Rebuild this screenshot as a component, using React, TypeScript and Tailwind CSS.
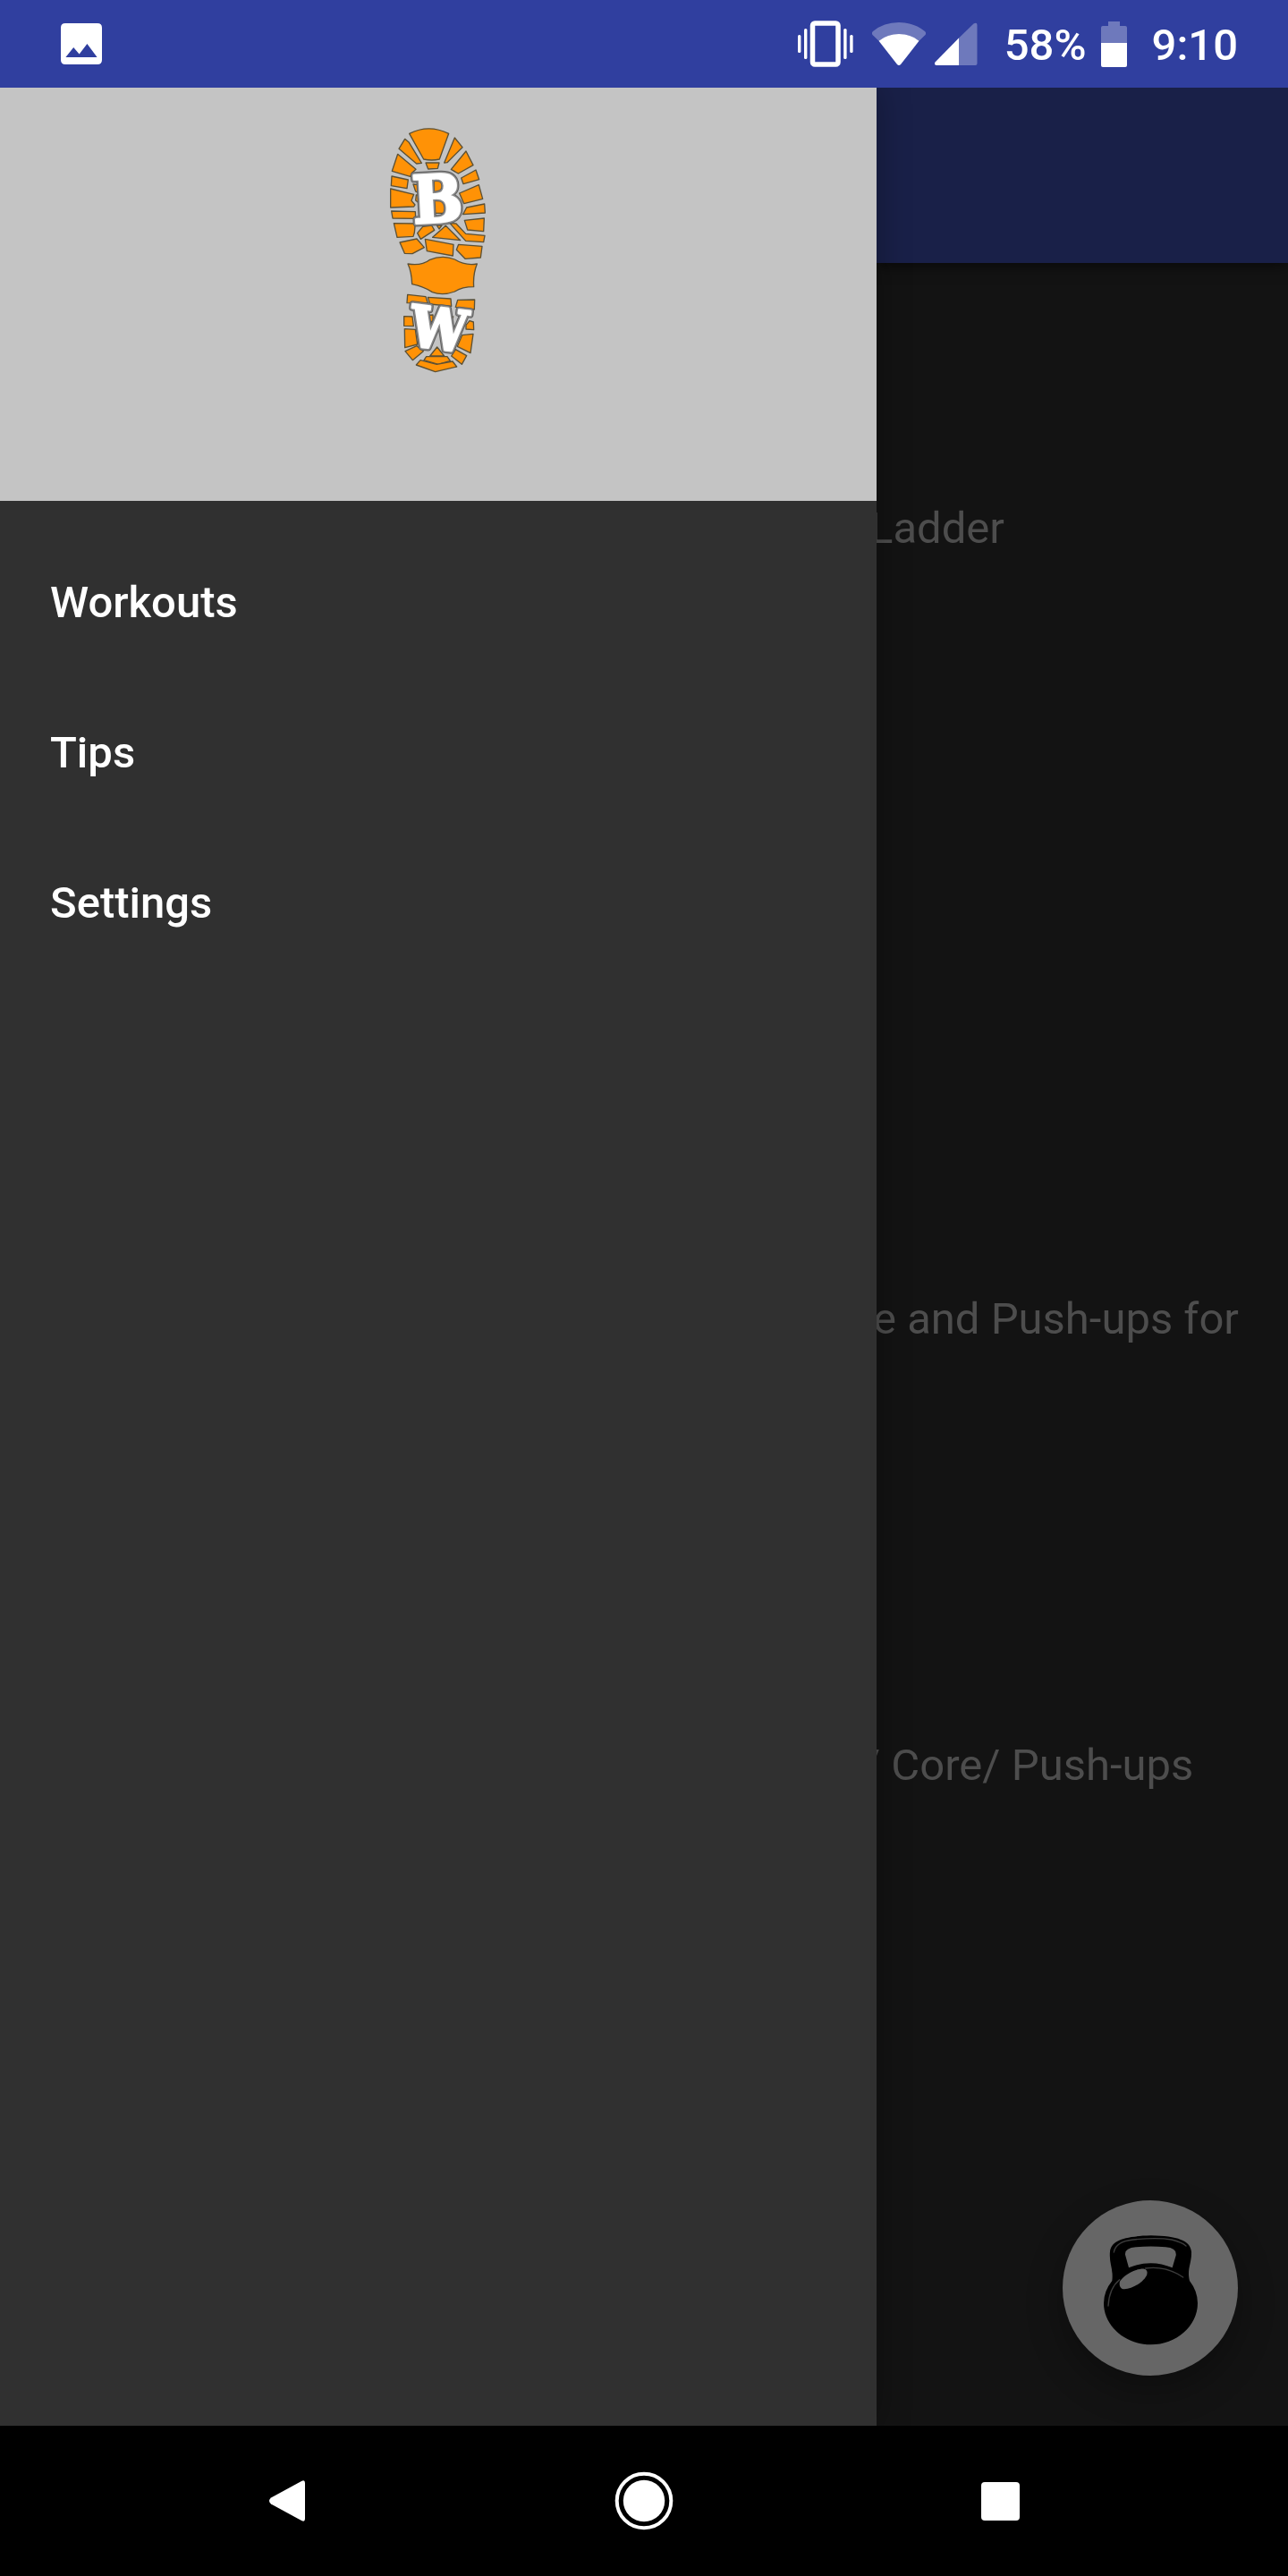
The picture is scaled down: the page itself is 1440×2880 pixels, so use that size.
import type { ReactNode } from "react";

const menuItems = ["Workouts", "Tips", "Settings"];

const treads = [
  "M113 58Q178 25 245 58L214 144Q188 150 161 144Z",
  "M168 156H213L208 175L176 177Z",
  "M98 76L112 88L154 157L137 159L78 109Z",
  "M74 127L135 178L122 190L116 202L55 184Z",
  "M54 201L109 213L105 242L52 233Z",
  "M50 243L128 262L120 283L132 297L128 303L50 306Z",
  "M53 318L133 320L134 343L57 342Z",
  "M61 359L133 360L130 390L126 403L72 406Z",
  "M140 392L158 370L188 366L197 382L151 412Z",
  "M126 228L144 230L142 256L134 252Z",
  "M136 264L146 264L146 292L134 282Z",
  "M81 423L138 411L163 440L123 461L97 460Z",
  "M166 412L261 430L259 468L172 452Z",
  "M235 367L284 416L191 406Z",
  "M205 366H222L213 378Z",
  "M265 72L291 104L240 155L230 156Z",
  "M303 117L327 164L277 192L253 178Z",
  "M287 207L336 180L347 212L294 227Z",
  "M281 258L346 230L359 277L296 293Z",
  "M305 306L365 294L367 324L293 329Z",
  "M298 349L364 342L362 386L308 381Z",
  "M249 359L270 360L302 394L366 400L362 422L302 418Z",
  "M278 430L357 436L352 474L300 478L271 448Z",
  "M195 215H235V325H195Z",
  "M108 495Q155 502 180 482Q224 463 265 480Q300 502 340 495Q326 530 329 572Q290 572 265 588Q225 603 190 590Q160 570 122 563Q120 520 108 495Z",
  "M107 598L168 605L175 627L105 626Z",
  "M175 607L252 612L254 637L182 630Z",
  "M275 616L332 615L331 648L268 640Z",
  "M95 671L123 672L127 704L95 703Z",
  "M97 713L133 715L140 765L98 776Z",
  "M99 788L138 770L160 788L124 818Z",
  "M303 700L315 686L328 690L329 716L303 714Z",
  "M290 734L327 730L318 794L274 772Z",
  "M268 782L305 803L289 832L254 804Z",
  "M206 774L230 804H182Z",
  "M170 806L240 806L250 820L210 832L162 818Z",
  "M136 834L150 818L205 832L258 822L272 840L200 857Z",
  "M172 668L192 666L192 686L182 692Z",
  "M243 678L260 672L252 690Z",
];

const logoTextLayers = [
  { stroke: "#5f5f5f", strokeWidth: 23 },
  { stroke: "#8a8a8a", strokeWidth: 17 },
  { stroke: "#fff", strokeWidth: 8 },
];

function BootLogo() {
  return (
    <svg viewBox="0 0 420 900" className="h-[300px] w-[140px]" role="img" aria-label="BW boot print">
      <g fill="#ff9206" stroke="#5b5035" strokeWidth="4" strokeLinejoin="round">
        {treads.map((d) => (
          <path key={d} d={d} />
        ))}
      </g>
      <g
        fill="#fff"
        strokeLinejoin="round"
        fontWeight="700"
        textAnchor="middle"
        fontFamily="'DejaVu Serif Condensed', 'DejaVu Serif', serif"
      >
        {logoTextLayers.map((layer, i) => (
          <g key={layer.stroke} stroke={layer.stroke} strokeWidth={layer.strokeWidth} aria-hidden={i > 0}>
            <text x="211" y="355" fontSize="220" transform="rotate(-3 211 355)">B</text>
            <text x="204" y="780" fontSize="190" transform="rotate(7 204 780)">W</text>
          </g>
        ))}
      </g>
    </svg>
  );
}

function ImageIcon() {
  return (
    <svg viewBox="205 79 136 136" className="size-[46px]" aria-hidden="true">
      <path
        fill="#fff"
        fillRule="evenodd"
        d="M220 79H326Q341 79 341 94V200Q341 215 326 215H220Q205 215 205 200V94Q205 79 220 79ZM221 191H325L292 147L266 181L247 159Z"
      />
    </svg>
  );
}

function VibrateIcon() {
  return (
    <svg viewBox="893 23 62 52" className="h-[52px] w-[62px]" aria-hidden="true">
      <rect x="909.5" y="26" width="28.5" height="46" rx="2.5" fill="none" stroke="#fff" strokeWidth="5.5" />
      <g fill="#fff">
        <rect x="893" y="39" width="3.4" height="20" rx="1.5" />
        <rect x="900" y="32" width="3.4" height="34" rx="1.5" />
        <rect x="944.2" y="32" width="3.4" height="34" rx="1.5" />
        <rect x="951.2" y="39" width="3.4" height="20" rx="1.5" />
      </g>
    </svg>
  );
}

function WifiIcon() {
  return (
    <svg viewBox="976 24 60 49" className="h-[49px] w-[60px]" aria-hidden="true">
      <path
        fill="#fff"
        fillOpacity="0.3"
        d="M977 34Q989 24 1006 24Q1023 24 1035 34Q1037 36 1035.500 38L1028.500 44.700Q1019 37 1006 37Q993 37 983.500 44.700L976.500 38Q975 36 977 34Z"
      />
      <path fill="#fff" d="M983.500 44.700Q993 37 1006 37Q1019 37 1028.500 44.700L1008 71Q1006 73 1004 71Z" />
    </svg>
  );
}

function SignalIcon() {
  return (
    <svg viewBox="1046 26 48 48" className="size-12" aria-hidden="true">
      <path fill="#fff" fillOpacity="0.3" d="M1073 43.500L1089.500 27.500Q1093.500 25.500 1093.500 29V72Q1093.500 74 1091.500 74H1073Z" />
      <path fill="#fff" d="M1073 43.500V74H1048Q1045 73.500 1046.500 70.500Z" />
    </svg>
  );
}

function BatteryIcon() {
  return (
    <svg viewBox="1231 23 29 51" className="h-[51px] w-[29px]" aria-hidden="true">
      <path fill="#fff" fillOpacity="0.3" d="M1239 23H1252V28H1258Q1260 28 1260 30V47H1231V30Q1231 28 1233 28H1239Z" />
      <path fill="#fff" d="M1231 47H1260V72Q1260 74 1258 74H1233Q1231 74 1231 72Z" />
    </svg>
  );
}

function KettlebellIcon() {
  return (
    <svg viewBox="84 90 588 588" className="size-full" aria-hidden="true">
      <path
        fillRule="evenodd"
        d="M250 360C255 320 239 300 243 262C247 225 290 210 380 208C470 210 512 225 516 262C518 300 500 320 510 360Q537 395 537 435C537 512 465 574 380 574C295 574 222 512 222 435Q222 395 250 360ZM306 316L294 272Q292 250 330 247Q380 242 430 247Q468 250 464 275L452 316Q380 285 306 316Z"
      />
      <path fill="#666" d="M276 362C290 340 330 318 358 320Q372 324 366 342C352 368 310 392 284 387Q272 380 276 362Z" />
      <g fill="none" stroke="#3c3c3c" strokeWidth="4" strokeLinecap="round">
        <path d="M237 444Q240 385 275 356" />
        <path d="M362 318Q430 308 488 348" />
        <path d="M256 264Q262 228 320 222Q400 214 450 222Q484 230 498 243" />
      </g>
    </svg>
  );
}

function NavButton({ label, children }: { label: string; children: ReactNode }) {
  return (
    <button type="button" aria-label={label} className="flex flex-1 items-center justify-center">
      {children}
    </button>
  );
}

export default function App() {
  return (
    <div className="flex min-h-screen flex-col bg-black font-[Roboto,sans-serif] text-[49px] leading-[58px]">
      <header className="flex h-[98px] shrink-0 items-center bg-[#303f9f] pr-14 pl-[68px] font-medium text-white">
        <ImageIcon />
        <div className="ml-auto flex items-center">
          <VibrateIcon />
          <div className="ml-[21px] flex gap-[10px]">
            <WifiIcon />
            <SignalIcon />
          </div>
          <span className="ml-[30px] pt-1">58%</span>
          <span className="ml-4">
            <BatteryIcon />
          </span>
          <time className="ml-7 pt-1">9:10</time>
        </div>
      </header>

      <div className="relative flex flex-1 overflow-hidden bg-[#131313]">
        <aside className="z-10 flex w-[980px] max-w-[85%] shrink-0 flex-col bg-[#303030] shadow-[0_0_36px_rgba(0,0,0,0.3)]">
          <div className="flex h-[462px] justify-center bg-[#c4c4c4] pt-8">
            <BootLogo />
          </div>
          <nav className="pt-[30px]" aria-label="Main">
            <ul>
              {menuItems.map((item) => (
                <li key={item}>
                  <a href="#" className="flex h-[168px] items-center px-14 font-medium text-white">
                    {item}
                  </a>
                </li>
              ))}
            </ul>
          </nav>
        </aside>

        <main className="min-w-0 flex-1 text-[#4d4d4d]">
          <div className="h-[196px] bg-[#192048] shadow-[0_4px_14px_rgba(0,0,0,0.5)]" />
          <ul className="-ml-4 pt-[268px] whitespace-nowrap">
            <li className="pb-[826px] pl-2">Ladder</li>
            <li className="pb-[441px] pl-3">e and Push-ups for</li>
            <li>/ Core/ Push-ups</li>
          </ul>
        </main>

        <button
          type="button"
          aria-label="Start workout"
          className="absolute right-14 bottom-14 size-[196px] rounded-full bg-[#666] shadow-[0_16px_40px_rgba(0,0,0,0.3)]"
        >
          <KettlebellIcon />
        </button>
      </div>

      <footer className="flex h-[168px] shrink-0 bg-black px-[122px]">
        <NavButton label="Back">
          <svg viewBox="0 0 40 46" className="h-[46px] w-10" aria-hidden="true">
            <path fill="#fff" d="M2 19.500L36 1Q40 -1 40 3V43Q40 47 36 45L2 26.500Q-2 23 2 19.500Z" />
          </svg>
        </NavButton>
        <NavButton label="Home">
          <svg viewBox="0 0 66 66" className="size-[66px]" aria-hidden="true">
            <circle cx="33" cy="33" r="30.300" fill="none" stroke="#fff" strokeWidth="4" />
            <circle cx="33" cy="33" r="23.200" fill="#fff" />
          </svg>
        </NavButton>
        <NavButton label="Recent apps">
          <span className="size-[43px] rounded bg-white" />
        </NavButton>
      </footer>
    </div>
  );
}
